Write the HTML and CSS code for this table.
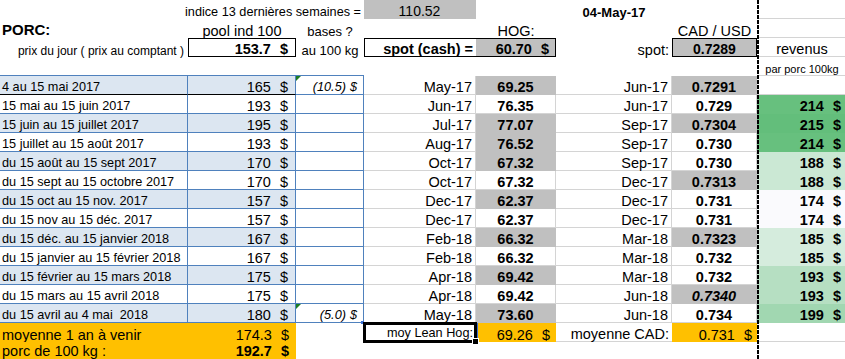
FILE: index.html
```html
<!DOCTYPE html>
<html lang="fr">
<head>
<meta charset="utf-8">
<title>PORC</title>
<link rel="stylesheet" href="styles.css">
</head>
<body>
<div class="sheet">
  <!-- row 1 -->
  <div class="c r sm span3">indice 13 dernières semaines =</div>
  <div class="c m gr f14">110.52</div>
  <div class="c"></div>
  <div class="c m b f13">04-May-17</div>
  <div class="c"></div>
  <div class="c gb colh"></div>
  <!-- row 2 -->
  <div class="c l b f15 porc">PORC:</div>
  <div class="c m">pool ind 100</div>
  <div class="c m f13">bases ?</div>
  <div class="c"></div>
  <div class="c m">HOG:</div>
  <div class="c"></div>
  <div class="c m">CAD / USD</div>
  <div class="c gb colh"></div>
  <!-- row 3 -->
  <div class="c r f12 prix">prix du jour ( prix au comptant )</div>
  <div class="c acct b box padb">153.7<span class="d">$</span></div>
  <div class="c m f13">au 100 kg</div>
  <div class="c r b boxl">spot (cash) =</div>
  <div class="c acct b gr boxr pade">60.70<span class="d">$</span></div>
  <div class="c r">spot:</div>
  <div class="c m b gr box f14">0.7289</div>
  <div class="c m gb colh">revenus</div>
  <!-- row 4 -->
  <div class="c tb"></div>
  <div class="c tb"></div>
  <div class="c tb"></div>
  <div class="c"></div>
  <div class="c"></div>
  <div class="c"></div>
  <div class="c"></div>
  <div class="c m gb colh f11">par porc 100kg</div>

  <!-- row 5 -->
  <div class="c l sm bt bl lab blk">4 au 15 mai 2017</div>
  <div class="c acct bt bl padb blk">165<span class="d">$</span></div>
  <div class="c acct it sm bt padc tri">(10.5)<span class="d2">$</span></div>
  <div class="c r g">May-17</div>
  <div class="c m b gr">69.25</div>
  <div class="c r g">Jun-17</div>
  <div class="c m b gr">0.7291</div>
  <div class="c gb colh"></div>
  <!-- row 6 -->
  <div class="c l sm bt lab">15 mai au 15 juin 2017</div>
  <div class="c acct bt padb">193<span class="d">$</span></div>
  <div class="c bt"></div>
  <div class="c r g">Jun-17</div>
  <div class="c m b g">76.35</div>
  <div class="c r g">Jun-17</div>
  <div class="c m b g">0.729</div>
  <div class="c acct b fill padh colh" style="background:#67c07e">214<span class="d">$</span></div>
  <!-- row 7 -->
  <div class="c l sm bt bl lab">15 juin au 15 juillet 2017</div>
  <div class="c acct bt bl padb">195<span class="d">$</span></div>
  <div class="c bt"></div>
  <div class="c r g">Jul-17</div>
  <div class="c m b gr">77.07</div>
  <div class="c r g">Sep-17</div>
  <div class="c m b gr">0.7304</div>
  <div class="c acct b fill padh colh" style="background:#63be7b">215<span class="d">$</span></div>
  <!-- row 8 -->
  <div class="c l sm bt lab">15 juillet au 15 août 2017</div>
  <div class="c acct bt padb">193<span class="d">$</span></div>
  <div class="c bt"></div>
  <div class="c r g">Aug-17</div>
  <div class="c m b gr">76.52</div>
  <div class="c r g">Sep-17</div>
  <div class="c m b g">0.730</div>
  <div class="c acct b fill padh colh" style="background:#67c07e">214<span class="d">$</span></div>
  <!-- row 9 -->
  <div class="c l sm bt bl lab">du 15 août au 15 sept 2017</div>
  <div class="c acct bt bl padb">170<span class="d">$</span></div>
  <div class="c bt"></div>
  <div class="c r g">Oct-17</div>
  <div class="c m b gr">67.32</div>
  <div class="c r g">Sep-17</div>
  <div class="c m b g">0.730</div>
  <div class="c acct b fill padh colh" style="background:#cbe8d4">188<span class="d">$</span></div>
  <!-- row 10 -->
  <div class="c l sm bt lab">du 15 sept au 15 octobre 2017</div>
  <div class="c acct bt padb">170<span class="d">$</span></div>
  <div class="c bt"></div>
  <div class="c r g">Oct-17</div>
  <div class="c m b g">67.32</div>
  <div class="c r g">Dec-17</div>
  <div class="c m b gr">0.7313</div>
  <div class="c acct b fill padh colh" style="background:#cbe8d4">188<span class="d">$</span></div>
  <!-- row 11 -->
  <div class="c l sm bt bl lab">du 15 oct au 15 nov. 2017</div>
  <div class="c acct bt bl padb">157<span class="d">$</span></div>
  <div class="c bt"></div>
  <div class="c r g">Dec-17</div>
  <div class="c m b gr">62.37</div>
  <div class="c r g">Dec-17</div>
  <div class="c m b g">0.731</div>
  <div class="c acct b fill padh colh" style="background:#fafafd">174<span class="d">$</span></div>
  <!-- row 12 -->
  <div class="c l sm bt lab">du 15 nov au 15 déc. 2017</div>
  <div class="c acct bt padb">157<span class="d">$</span></div>
  <div class="c bt"></div>
  <div class="c r g">Dec-17</div>
  <div class="c m b g">62.37</div>
  <div class="c r g">Dec-17</div>
  <div class="c m b g">0.731</div>
  <div class="c acct b fill padh colh" style="background:#fafafd">174<span class="d">$</span></div>
  <!-- row 13 -->
  <div class="c l sm bt bl lab">du 15 déc. au 15 janvier 2018</div>
  <div class="c acct bt bl padb">167<span class="d">$</span></div>
  <div class="c bt"></div>
  <div class="c r g">Feb-18</div>
  <div class="c m b gr">66.32</div>
  <div class="c r g">Mar-18</div>
  <div class="c m b gr">0.7323</div>
  <div class="c acct b fill padh colh" style="background:#d5ecdd">185<span class="d">$</span></div>
  <!-- row 14 -->
  <div class="c l sm bt lab">du 15 janvier au 15 février 2018</div>
  <div class="c acct bt padb">167<span class="d">$</span></div>
  <div class="c bt"></div>
  <div class="c r g">Feb-18</div>
  <div class="c m b g">66.32</div>
  <div class="c r g">Mar-18</div>
  <div class="c m b g">0.732</div>
  <div class="c acct b fill padh colh" style="background:#d5ecdd">185<span class="d">$</span></div>
  <!-- row 15 -->
  <div class="c l sm bt bl lab">du 15 février au 15 mars 2018</div>
  <div class="c acct bt bl padb">175<span class="d">$</span></div>
  <div class="c bt"></div>
  <div class="c r g">Apr-18</div>
  <div class="c m b gr">69.42</div>
  <div class="c r g">Mar-18</div>
  <div class="c m b g">0.732</div>
  <div class="c acct b fill padh colh" style="background:#b6dfc2">193<span class="d">$</span></div>
  <!-- row 16 -->
  <div class="c l sm bt lab">du 15 mars au 15 avril 2018</div>
  <div class="c acct bt padb">175<span class="d">$</span></div>
  <div class="c bt"></div>
  <div class="c r g">Apr-18</div>
  <div class="c m b g">69.42</div>
  <div class="c r g">Jun-18</div>
  <div class="c m b gr it">0.7340</div>
  <div class="c acct b fill padh colh" style="background:#b6dfc2">193<span class="d">$</span></div>
  <!-- row 17 -->
  <div class="c l sm bt bl lab">du 15 avril au 4 mai&nbsp; 2018</div>
  <div class="c acct bt bl padb">180<span class="d">$</span></div>
  <div class="c acct it sm bt padc tri handle">(5.0)<span class="d2">$</span></div>
  <div class="c r g">May-18</div>
  <div class="c m b gr">73.60</div>
  <div class="c r g">Jun-18</div>
  <div class="c m b g">0.734</div>
  <div class="c acct b fill padh colh" style="background:#a1d7b1">199<span class="d">$</span></div>
  <!-- row 18 -->
  <div class="c l or lab">moyenne 1 an à venir</div>
  <div class="c acct or padb">174.3<span class="d">$</span></div>
  <div class="c"></div>
  <div class="c r sm sel">moy Lean Hog:</div>
  <div class="c acct or pade ref">69.26<span class="d">$</span></div>
  <div class="c r gb">moyenne CAD:</div>
  <div class="c acct or padg">0.731<span class="d">$</span></div>
  <div class="c gb colh"></div>
  <!-- row 19 -->
  <div class="c l or lab last">porc de 100 kg :</div>
  <div class="c acct b or padb last">192.7<span class="d">$</span></div>
  <div class="c"></div>
  <div class="c"></div>
  <div class="c"></div>
  <div class="c"></div>
  <div class="c"></div>
  <div class="c gb colh"></div>

  <div class="pagebreak"></div>
</div>
</body>
</html>
```

FILE: styles.css
```css
html, body {
  margin: 0;
  padding: 0;
  background: #ffffff;
}

.sheet {
  position: relative;
  display: grid;
  grid-template-columns: 188px 108px 68px 112px 80px 116px 85px 88px;
  grid-auto-rows: 19px;
  width: 845px;
  height: 359px;
  overflow: hidden;
  font-family: "Liberation Sans", Arial, sans-serif;
  font-size: 14.5px;
  color: #000;
}

.c {
  box-sizing: border-box;
  display: flex;
  align-items: flex-end;
  padding: 0 3px;
  line-height: 1;
  white-space: nowrap;
  min-width: 0;
}

.l { justify-content: flex-start; }
.r { justify-content: flex-end; }
.m { justify-content: center; }
.acct { justify-content: flex-end; }

.span3 { grid-column: 1 / 4; }

.b { font-weight: bold; }
.it { font-style: italic; }
.sm { font-size: 12.7px; }
.f11 { font-size: 11px; }
.f12 { font-size: 12px; }
.f13 { font-size: 13px; }
.f14 { font-size: 14px; }
.f15 { font-size: 15px; }

.porc { padding-left: 2px; padding-bottom: 1px; }
.prix { padding-right: 4px; }
.lab { padding-left: 2px; }
.last { padding-bottom: 3px; }

.d { margin-left: 9px; }
.d2 { margin-left: 4px; }
.padb { padding-right: 7px; }
.padc { padding-right: 6px; }
.pade { padding-right: 6px; }
.padg { padding-right: 5px; }
.padh { padding-right: 4px; }

/* gridlines */
.g {
  border-right: 1px solid #d4d4d4;
  border-bottom: 1px solid #d4d4d4;
}
.gb {
  border-bottom: 1px solid #d4d4d4;
}
.colh { padding-left: 5px; }

/* fills */
.gr {
  background: #c0c0c0;
  border-right: 1px solid transparent;
  border-bottom: 1px solid transparent;
}
.or { background: #ffc000; }
.bl { background: #dce6f1; }
.fill {
  border-bottom: 1px solid transparent;
}

/* blue-bordered table */
.bt {
  border-right: 1px solid #4f81bd;
  border-bottom: 1px solid #4f81bd;
}
.tb { border-bottom: 1px solid #4f81bd; }
.bt.blk { border-bottom-color: #000; }

/* black boxes */
.box { border: 1px solid #000; }
.boxl {
  border-top: 1px solid #000;
  border-bottom: 1px solid #000;
  border-left: 1px solid #000;
}
.boxr {
  border-top: 1px solid #000;
  border-bottom: 1px solid #000;
  border-right: 1px solid #000;
}

/* excel indicators */
.tri { position: relative; }
.tri::before {
  content: "";
  position: absolute;
  left: 0;
  top: 0;
  border-top: 5px solid #1e7d22;
  border-right: 5px solid transparent;
}
.handle::after {
  content: "";
  position: absolute;
  right: -1px;
  bottom: -2px;
  width: 3px;
  height: 3px;
  background: #3b6fd4;
}

.sel {
  position: relative;
  z-index: 2;
  border: 2px solid #000;
  box-shadow: 0 0 0 1px #000;
  padding-right: 1px;
  padding-bottom: 0;
}
.sel::after {
  content: "";
  position: absolute;
  right: -5px;
  bottom: -5px;
  width: 5px;
  height: 5px;
  background: #000;
  border: 1px solid #fff;
}
.ref { border-left: 2px solid #3b6fd4; }

.pagebreak {
  position: absolute;
  left: 757px;
  top: 0;
  width: 2px;
  height: 100%;
  background: repeating-linear-gradient(to bottom, #000 0, #000 4px, transparent 4px, transparent 5px);
  z-index: 3;
}
```
